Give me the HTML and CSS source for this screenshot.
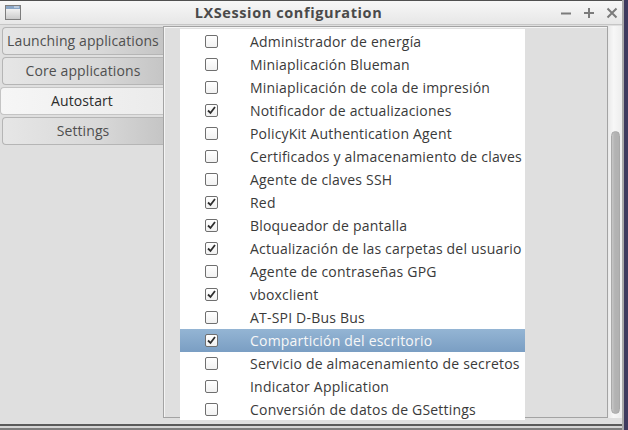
FILE: index.html
```html
<!DOCTYPE html>
<html>
<head>
<meta charset="utf-8">
<link rel="stylesheet" href="styles.css">
</head>
<body>
<div class="window">
  <div class="titlebar">
    <svg class="winicon" width="16" height="15" viewBox="0 0 16 15">
      <defs>
        <linearGradient id="wg" x1="0" y1="0" x2="0" y2="1">
          <stop offset="0" stop-color="#ffffff"/>
          <stop offset="1" stop-color="#c9c9c9"/>
        </linearGradient>
      </defs>
      <rect x="0.5" y="0.5" width="15" height="14" fill="url(#wg)" stroke="#7d7d7d"/>
      <rect x="1" y="1" width="14" height="3" fill="#8aa6c6"/>
      <rect x="9" y="1.5" width="5" height="1" fill="#e8eef5"/>
    </svg>
    <div class="title">LXSession configuration</div>
    <div class="controls">
      <svg width="12" height="12" viewBox="0 0 12 12"><path d="M1 6.5h10" stroke="#7b7b7b" stroke-width="2"/></svg>
      <svg width="12" height="12" viewBox="0 0 12 12"><path d="M1 6h10M6 1v10" stroke="#7b7b7b" stroke-width="2"/></svg>
      <svg width="12" height="12" viewBox="0 0 12 12"><path d="M1.5 1.5l9 9M10.5 1.5l-9 9" stroke="#7b7b7b" stroke-width="2"/></svg>
    </div>
  </div>
  <div class="main">
    <div class="tabs">
      <div class="tab">Launching applications</div>
      <div class="tab">Core applications</div>
      <div class="tab active">Autostart</div>
      <div class="tab">Settings</div>
    </div>
    <div class="frame">
      <div class="list">
        <div class="row"><span class="cb"></span><span class="label">Administrador de energía</span></div>
        <div class="row"><span class="cb"></span><span class="label">Miniaplicación Blueman</span></div>
        <div class="row"><span class="cb"></span><span class="label">Miniaplicación de cola de impresión</span></div>
        <div class="row"><span class="cb checked"><svg width="11" height="11" viewBox="0 0 11 11"><path d="M2 5.5l2.5 2.5 4.5-6" fill="none" stroke="#2e2e2e" stroke-width="1.8"/></svg></span><span class="label">Notificador de actualizaciones</span></div>
        <div class="row"><span class="cb"></span><span class="label">PolicyKit Authentication Agent</span></div>
        <div class="row"><span class="cb"></span><span class="label">Certificados y almacenamiento de claves</span></div>
        <div class="row"><span class="cb"></span><span class="label">Agente de claves SSH</span></div>
        <div class="row"><span class="cb checked"><svg width="11" height="11" viewBox="0 0 11 11"><path d="M2 5.5l2.5 2.5 4.5-6" fill="none" stroke="#2e2e2e" stroke-width="1.8"/></svg></span><span class="label">Red</span></div>
        <div class="row"><span class="cb checked"><svg width="11" height="11" viewBox="0 0 11 11"><path d="M2 5.5l2.5 2.5 4.5-6" fill="none" stroke="#2e2e2e" stroke-width="1.8"/></svg></span><span class="label">Bloqueador de pantalla</span></div>
        <div class="row"><span class="cb checked"><svg width="11" height="11" viewBox="0 0 11 11"><path d="M2 5.5l2.5 2.5 4.5-6" fill="none" stroke="#2e2e2e" stroke-width="1.8"/></svg></span><span class="label">Actualización de las carpetas del usuario</span></div>
        <div class="row"><span class="cb"></span><span class="label">Agente de contraseñas GPG</span></div>
        <div class="row"><span class="cb checked"><svg width="11" height="11" viewBox="0 0 11 11"><path d="M2 5.5l2.5 2.5 4.5-6" fill="none" stroke="#2e2e2e" stroke-width="1.8"/></svg></span><span class="label">vboxclient</span></div>
        <div class="row"><span class="cb"></span><span class="label">AT-SPI D-Bus Bus</span></div>
        <div class="row selected"><span class="cb checked"><svg width="11" height="11" viewBox="0 0 11 11"><path d="M2 5.5l2.5 2.5 4.5-6" fill="none" stroke="#2e2e2e" stroke-width="1.8"/></svg></span><span class="label">Compartición del escritorio</span></div>
        <div class="row"><span class="cb"></span><span class="label">Servicio de almacenamiento de secretos</span></div>
        <div class="row"><span class="cb"></span><span class="label">Indicator Application</span></div>
        <div class="row"><span class="cb"></span><span class="label">Conversión de datos de GSettings</span></div>
      </div>
    </div>
    <div class="scrollbar"><div class="thumb"></div></div>
  </div>
  <div class="footer"></div>
</div>
</body>
</html>
```

FILE: styles.css
```css
* { box-sizing: border-box; }
html, body { margin: 0; padding: 0; }
body {
  background: #3e3a5e;
  width: 628px;
  height: 430px;
  overflow: hidden;
  font-family: "Open Sans", "Noto Sans", sans-serif;
}
.window {
  width: 624px;
  height: 430px;
  background: #dfdfdf;
  display: flex;
  flex-direction: column;
  border-right: 2px solid #a9a9a9;
}
.titlebar {
  height: 25px;
  flex: none;
  display: flex;
  align-items: center;
  border-top: 1px solid #505050;
  border-bottom: 1px solid #c6c6c6;
  background: linear-gradient(#f7f7f7, #e7e7e7);
  padding-left: 5px;
  padding-right: 4px;
}
.winicon { flex: none; display: block; }
.title {
  flex: 1;
  text-align: center;
  font-weight: 700;
  font-size: 14.5px;
  color: #4a4a4a;
  padding-right: 4px;
  letter-spacing: 0.6px;
}
.controls {
  display: flex;
  gap: 11px;
  align-items: center;
}
.controls svg { display: block; }
.main {
  flex: 1;
  display: flex;
  min-height: 0;
}
.tabs {
  width: 163px;
  flex: none;
  display: flex;
  flex-direction: column;
  gap: 2px;
  padding-top: 2px;
  padding-left: 2px;
}
.tab {
  height: 28px;
  border: 1px solid #b5b5b5;
  border-right: none;
  border-radius: 4px 0 0 4px;
  background: linear-gradient(to right, #e6e6e6, #d8d8d8 60%, #c5c5c5);
  color: #4f4f4f;
  font-size: 14px;
  letter-spacing: 0.1px;
  display: flex;
  align-items: center;
  justify-content: center;
  padding-bottom: 1px;
}
.tab.active {
  margin-left: -2px;
  background: linear-gradient(to right, #f6f6f6, #ebebeb);
  color: #2c2c2c;
  border-color: #c4c4c4;
}
.frame {
  width: 445px;
  flex: none;
  margin-top: 1px;
  margin-bottom: 6px;
  border: 1px solid #a3a3a3;
  box-shadow: inset 1px 1px 0 #f4f4f4;
  padding: 2px 0 0 16px;
}
.list {
  width: 345px;
  height: 391px;
  overflow: hidden;
  background: #ffffff;
  padding-top: 1px;
}
.row {
  height: 23px;
  display: flex;
  align-items: center;
  font-size: 14px;
  letter-spacing: 0.2px;
  color: #3a3a3a;
  white-space: nowrap;
}
.row.selected {
  background: linear-gradient(#94b5d4, #7a9ec3);
  color: #f7f7f7;
}
.cb {
  width: 13px;
  height: 13px;
  margin-left: 25px;
  margin-right: 32px;
  border: 1px solid #6f6f6f;
  border-radius: 2px;
  background: linear-gradient(#ffffff, #f1f1f1);
  display: flex;
  align-items: center;
  justify-content: center;
  flex: none;
}
.cb svg { display: block; }
.label { display: block; }
.scrollbar {
  width: 14px;
  flex: none;
  margin-top: 1px;
  margin-bottom: 6px;
  background: linear-gradient(to right, #e9e9e9, #f7f7f7 40%, #ededed);
  padding: 105px 2px 4px 3px;
}
.thumb {
  width: 9px;
  height: 100%;
  border-radius: 5px;
  background: linear-gradient(to right, #c6c6c6, #b3b3b3 40%, #b1b1b1);
  border: 1px solid #a9a9a9;
}
.footer {
  height: 6px;
  flex: none;
  border-top: 1px solid #5a5a5a;
  border-bottom: 2px solid #7d7d7d;
  background: #d4d4d4;
  box-shadow: inset 0 1px 0 #5a5a5a;
}
```
